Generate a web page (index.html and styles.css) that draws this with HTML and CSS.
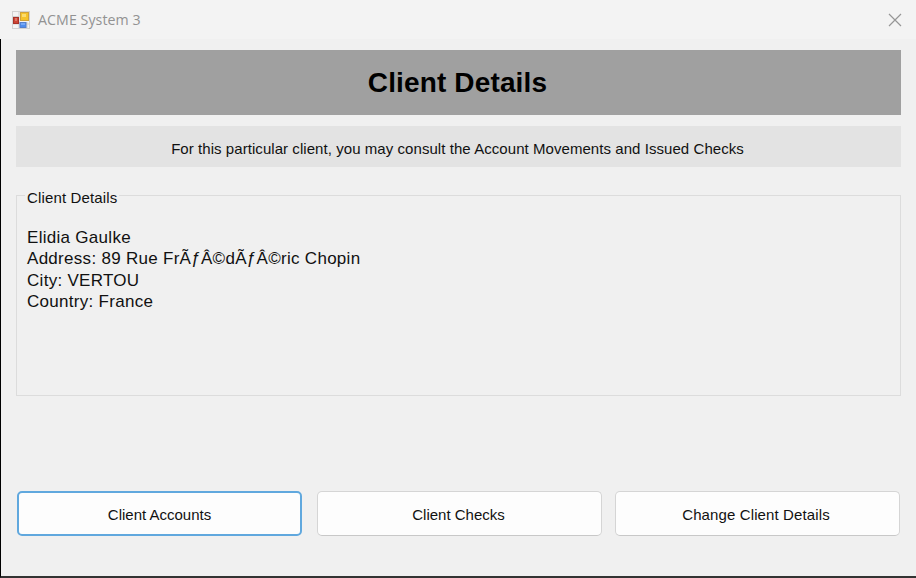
FILE: index.html
```html
<!DOCTYPE html>
<html lang="en">
<head>
<meta charset="utf-8">
<title>ACME System 3</title>
<link rel="stylesheet" href="styles.css">
</head>
<body>
<div class="window">
  <header class="titlebar">
    <svg class="app-icon" viewBox="0 0 18 18" width="18" height="18">
      <rect x=".5" y=".5" width="17" height="17" fill="#f4f4f4" stroke="#d2d2d2"/>
      <path d="M1 5.5h6M7 1v16M1 13h16M15 11v6" stroke="#d0d0d0" fill="none"/>
      <rect x="1.5" y="6.5" width="5" height="6" fill="#cc4434" stroke="#a83228"/>
      <rect x="3" y="7" width="2" height="3" fill="#dc7668"/>
      <rect x="8.5" y="1.5" width="8" height="8" fill="#f5c32c" stroke="#cfa23c"/>
      <rect x="10" y="3" width="4" height="3" fill="#fbdc70"/>
      <rect x="8" y="11.5" width="6" height="5" fill="#4e8df0" stroke="#5680cc"/>
      <rect x="9" y="12" width="4" height="2" fill="#76a8f6"/>
    </svg>
    <span class="caption">ACME System 3</span>
    <svg class="close" viewBox="0 0 14 14" width="14" height="14"><path d="M1 1l12 12M13 1L1 13" stroke="#969696" stroke-width="1.2" fill="none"/></svg>
  </header>
  <main class="client">
    <h1 class="heading"><span>Client Details</span></h1>
    <p class="hint"><span>For this particular client, you may consult the Account Movements and Issued Checks</span></p>
    <fieldset class="group">
      <legend>Client Details</legend>
      <div class="details">
        <div class="name">Elidia Gaulke</div>
        <div class="address">Address: 89 Rue FrÃƒÂ©dÃƒÂ©ric Chopin</div>
        <div class="city">City: VERTOU</div>
        <div class="country">Country: France</div>
      </div>
    </fieldset>
    <div class="actions">
      <button class="btn primary"><span>Client Accounts</span></button>
      <button class="btn middle"><span>Client Checks</span></button>
      <button class="btn wide-label"><span>Change Client Details</span></button>
    </div>
  </main>
</div>
</body>
</html>
```

FILE: styles.css
```css
* { box-sizing: border-box; }
body { margin: 0; font-family: "Liberation Sans", Arial, sans-serif; color: #111; }
.window { width: 916px; height: 578px; display: flex; flex-direction: column; background: #f0f0f0; overflow: hidden; }
.titlebar { height: 39px; flex: none; display: flex; align-items: center; padding: 0 14px 0 12px; background: #f3f3f3; }
.app-icon { flex: none; }
.caption { margin-left: 8px; font: 14.2px "Open Sans", "Noto Sans", sans-serif; color: #929292; letter-spacing: 0.07px; }
.close { margin-left: auto; }
.client { flex: 1; display: flex; flex-direction: column; padding: 11px 15px 0; border-left: 1px solid #000; border-bottom: 2px solid #333; }
.heading { margin: 0; height: 65px; flex: none; display: flex; align-items: center; justify-content: center; background: #a0a0a0; font-size: 28px; font-weight: 700; letter-spacing: 0.14px; padding-right: 2px; color: #000; }
.hint { margin: 11px 0 0; height: 41px; flex: none; display: flex; align-items: center; justify-content: center; padding: 4px 2px 0 0; background: #e3e3e3; font-size: 15px; letter-spacing: 0.06px; white-space: nowrap; }
.group { margin: 20px 0 0; height: 209px; flex: none; border: 1px solid #dcdcdc; padding: 0; min-width: 0; }
.group legend { margin-left: 8px; padding: 4px 2px 0; font-size: 15px; line-height: 13px; letter-spacing: 0.14px; }
.details { padding: 23px 0 0 10px; font-size: 17px; line-height: 21.3px; letter-spacing: 0.29px; white-space: nowrap; }
.actions { margin-top: 95px; display: grid; grid-template-columns: repeat(3, 285px); column-gap: 14px; padding-left: 1px; }
.btn { height: 45px; border: 1px solid #d5d5d5; border-bottom-color: #c8c8c8; border-radius: 5px; background: #fdfdfd; font: 15px "Liberation Sans", Arial, sans-serif; color: #111; padding: 1px 0 0; }
.btn.primary { border: 2px solid #60a8de; }
.btn.middle { margin: 0 -1px 0 1px; padding-right: 2px; }
.btn.wide-label { letter-spacing: 0.12px; padding-right: 3px; }
```
